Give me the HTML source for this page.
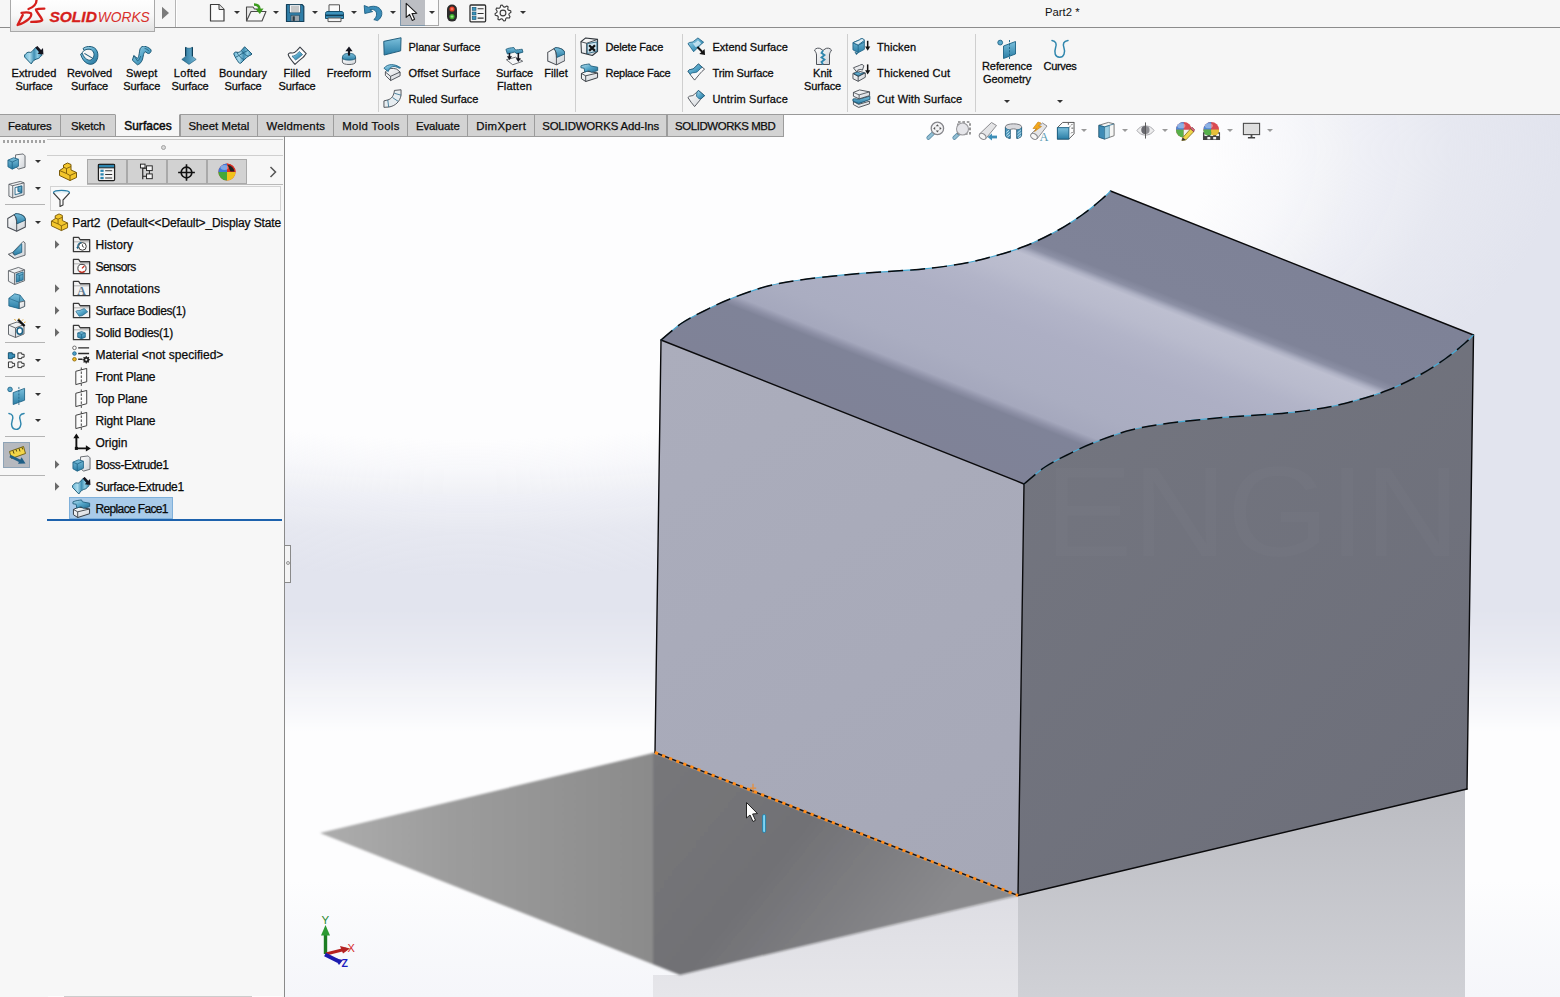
<!DOCTYPE html>
<html lang="en">
<head>
<meta charset="utf-8">
<title>Part2 * - SOLIDWORKS</title>
<style>
*{box-sizing:border-box;margin:0;padding:0}
html,body{width:1560px;height:997px;overflow:hidden;background:#f6f6f6}
body{position:relative;font-family:"Liberation Sans",sans-serif;font-size:11px;color:#111;-webkit-font-smoothing:antialiased}
.abs{position:absolute}
#titlebar{position:absolute;left:0;top:0;width:1560px;height:28px;background:#f6f6f6;border-bottom:1px solid #8c8c8c}
#ribbon{position:absolute;left:0;top:28px;width:1560px;height:87px;background:#f6f6f6}
#tabs{position:absolute;left:0;top:115px;width:1560px;height:22px}
#leftpanel{position:absolute;left:0;top:137px;width:285px;height:860px;background:#f7f7f7}
#viewport{position:absolute;left:0;top:0;width:1560px;height:997px;overflow:hidden}
/*VIEWPORT-CSS-S*/
#tabs{background:transparent}
.tab{position:absolute;top:-1px;height:22.5px;background:#d3d3d3;border:1px solid #9c9c9c;text-align:center;font-size:11.4px;line-height:22.5px;color:#0c0c0c;white-space:nowrap;-webkit-text-stroke:.25px #0c0c0c}
.tab.act{background:#f6f6f6;border-top-color:#f6f6f6;border-bottom-color:#f6f6f6;font-size:11.9px;-webkit-text-stroke:.5px #0c0c0c}
/*VIEWPORT-CSS-E*/
/*RIBBON-CSS-S*/
.lbl{position:absolute;width:80px;text-align:center;font-size:11px;line-height:13px;white-space:nowrap;color:#0a0a0a;-webkit-text-stroke:.28px #0a0a0a}
.slbl{position:absolute;font-size:11px;line-height:13px;white-space:nowrap;color:#0a0a0a;-webkit-text-stroke:.28px #0a0a0a}
.sep{position:absolute;top:6px;width:1px;height:78px;background:#cfcfcf}
.dar{position:absolute;width:0;height:0;border-left:3px solid transparent;border-right:3px solid transparent;border-top:3.5px solid #333}
#ribbon{border-bottom:1px solid #999}
/*RIBBON-CSS-E*/
/*TREE-CSS-S*/
.vsep{position:absolute;left:5px;width:40px;height:1px;background:#b4b4b4}
.ptab{position:absolute;top:22px;width:40.6px;height:25px;background:#d2d2d2;border:1px solid #a9a9a9}
.trow{position:absolute;font-size:12px;line-height:16px;white-space:nowrap;color:#0a0a0a;-webkit-text-stroke:.25px #0a0a0a}
/*TREE-CSS-E*/
</style>
</head>
<body>
<!--GDEFS-S--><svg width="0" height="0" style="position:absolute"><defs>
<linearGradient id="ib" x1="0" y1="0" x2="1" y2="1"><stop offset="0" stop-color="#b4deee"/><stop offset=".5" stop-color="#55a6c9"/><stop offset="1" stop-color="#226f95"/></linearGradient>
<linearGradient id="ibh" x1="0" y1="0" x2="1" y2="0"><stop offset="0" stop-color="#6fb9d8"/><stop offset=".3" stop-color="#a9daec"/><stop offset=".55" stop-color="#3f8fb4"/><stop offset=".75" stop-color="#8ccbe3"/><stop offset="1" stop-color="#3a88ae"/></linearGradient>
<linearGradient id="ibl" x1="0" y1="0" x2="1" y2="0"><stop offset="0" stop-color="#2a6f92"/><stop offset=".5" stop-color="#4a94b8"/><stop offset="1" stop-color="#78b8d6"/></linearGradient>
<linearGradient id="ib2" x1="0" y1="0" x2="0" y2="1"><stop offset="0" stop-color="#7cc0dc"/><stop offset="1" stop-color="#2a7ea6"/></linearGradient>
<linearGradient id="iw" x1="0" y1="0" x2="1" y2="1"><stop offset="0" stop-color="#ffffff"/><stop offset="1" stop-color="#cfd3d8"/></linearGradient>
<linearGradient id="iy" x1="0" y1="0" x2="1" y2="1"><stop offset="0" stop-color="#ffe27a"/><stop offset="1" stop-color="#d79a10"/></linearGradient>
</defs></svg><!--GDEFS-E-->
<div id="viewport">
<svg class="abs" style="left:0;top:0" width="1560" height="997" viewBox="0 0 1560 997">
<defs>
<radialGradient id="bgrad" cx="470" cy="150" r="1090" gradientUnits="userSpaceOnUse" gradientTransform="translate(470,150) scale(1,0.39) translate(-470,-150)">
<stop offset="0" stop-color="#e2e4ee" stop-opacity="0"/><stop offset="0.68" stop-color="#e2e4ee" stop-opacity="0"/><stop offset="0.75" stop-color="#e2e4ee" stop-opacity=".2"/><stop offset="0.81" stop-color="#e2e4ee" stop-opacity=".5"/><stop offset="0.9" stop-color="#e2e4ee" stop-opacity=".85"/><stop offset="1" stop-color="#e2e4ee" stop-opacity="1"/>
</radialGradient>
<linearGradient id="bgl" x1="0" y1="115" x2="0" y2="997" gradientUnits="userSpaceOnUse">
<stop offset="0" stop-color="#fff"/><stop offset="0.56" stop-color="#fff"/><stop offset="0.61" stop-color="#c4c4c4"/><stop offset="0.66" stop-color="#555"/><stop offset="0.70" stop-color="#000"/>
</linearGradient>
<mask id="ml" maskUnits="userSpaceOnUse" x="285" y="115" width="1275" height="882"><rect x="285" y="115" width="1275" height="882" fill="url(#bgl)"/></mask>
<linearGradient id="bgbot" x1="0" y1="880" x2="0" y2="997" gradientUnits="userSpaceOnUse">
<stop offset="0" stop-color="#f4f5f9" stop-opacity="0"/><stop offset="1" stop-color="#f5f6fa" stop-opacity="1"/>
</linearGradient>
<linearGradient id="topg" x1="661" y1="340" x2="773.5" y2="56.5" gradientUnits="userSpaceOnUse">
<stop offset="0" stop-color="#7f8297"/><stop offset="0.19" stop-color="#7f8398"/><stop offset="0.205" stop-color="#8d90a6"/><stop offset="0.225" stop-color="#a5a8bd"/><stop offset="0.3" stop-color="#aaadc1"/><stop offset="0.48" stop-color="#adafc4"/><stop offset="0.57" stop-color="#b2b4c8"/><stop offset="0.63" stop-color="#b9bbcd"/><stop offset="0.7" stop-color="#bdbfd0"/><stop offset="0.712" stop-color="#aeb1c4"/><stop offset="0.728" stop-color="#8c90a5"/><stop offset="0.75" stop-color="#7f8398"/><stop offset="1" stop-color="#7e8297"/>
</linearGradient>
<linearGradient id="leftg" x1="661" y1="340" x2="1020" y2="890" gradientUnits="userSpaceOnUse">
<stop offset="0" stop-color="#abadbc"/><stop offset="1" stop-color="#a6a8b7"/>
</linearGradient>
<linearGradient id="rightg" x1="1024" y1="420" x2="1467" y2="800" gradientUnits="userSpaceOnUse">
<stop offset="0" stop-color="#73757f"/><stop offset="1" stop-color="#6d6f7a"/>
</linearGradient>
<linearGradient id="shg" x1="320" y1="0" x2="653" y2="0" gradientUnits="userSpaceOnUse">
<stop offset="0" stop-color="#adadad"/><stop offset="0.4" stop-color="#9c9c9c"/><stop offset="1" stop-color="#8b8b8b"/>
</linearGradient>
<linearGradient id="shg2" x1="653" y1="760" x2="900" y2="960" gradientUnits="userSpaceOnUse">
<stop offset="0" stop-color="#77777a"/><stop offset="0.5" stop-color="#717175"/><stop offset="1" stop-color="#8a8a8d"/>
</linearGradient>
<linearGradient id="refl1" x1="0" y1="790" x2="0" y2="997" gradientUnits="userSpaceOnUse">
<stop offset="0" stop-color="#bbbcc2"/><stop offset="1" stop-color="#d0d1d6"/>
</linearGradient>
<linearGradient id="refl2" x1="0" y1="890" x2="0" y2="997" gradientUnits="userSpaceOnUse">
<stop offset="0" stop-color="#dddde3"/><stop offset="1" stop-color="#e6e6ea"/>
</linearGradient>
<filter id="soft" x="-5%" y="-5%" width="110%" height="110%"><feGaussianBlur stdDeviation="1.2"/></filter>
<clipPath id="cl"><rect x="285" y="137" width="368" height="860"/></clipPath>
<clipPath id="cr"><rect x="653" y="137" width="907" height="860"/></clipPath>
</defs>
<rect x="285" y="115" width="1275" height="882" fill="#fdfdfe"/>
<g mask="url(#ml)"><rect x="285" y="115" width="1275" height="882" fill="url(#bgrad)"/></g>
<rect x="285" y="880" width="1275" height="117" fill="url(#bgbot)"/>
<!-- floor reflections -->
<polygon points="653,975 653,997 1018,997 1018,895.5 680,975" fill="url(#refl2)"/>
<polygon points="1018,895.5 1018,997 1465,997 1465,789" fill="url(#refl1)"/>
<!-- shadow -->
<g filter="url(#soft)">
<polygon points="655,752.5 320,833 680,975 1018,895.5" fill="url(#shg)" clip-path="url(#cl)"/>
<polygon points="655,752.5 320,833 680,975 1018,895.5" fill="url(#shg2)" clip-path="url(#cr)"/>
</g>
<!-- faces -->
<polygon points="661,340 1024,484 1018,895.5 655,752.5" fill="url(#leftg)"/>
<path d="M1024.0 484.0 C1027.5 481.2 1037.8 471.8 1045.0 467.0 C1052.2 462.2 1059.0 459.0 1067.0 455.0 C1075.0 451.0 1082.3 447.2 1093.0 443.0 C1103.7 438.8 1118.2 433.3 1131.0 430.0 C1143.8 426.7 1154.0 425.1 1170.0 423.0 C1186.0 420.9 1208.3 418.8 1227.0 417.2 C1245.7 415.6 1265.9 414.9 1282.0 413.4 C1298.1 411.9 1311.2 410.1 1323.5 408.0 C1335.8 405.9 1344.9 403.4 1355.6 400.5 C1366.3 397.6 1376.9 394.6 1387.6 390.3 C1398.3 386.1 1410.1 380.2 1419.7 375.0 C1429.3 369.8 1437.5 364.2 1445.0 359.0 C1452.5 353.8 1459.8 347.5 1464.5 343.5 C1469.2 339.5 1472.0 336.4 1473.5 335.0 L1467 789 L1018 895.5 Z" fill="url(#rightg)"/>
<path d="M661.0 340.0 C664.5 337.2 674.8 327.8 682.0 323.0 C689.2 318.2 696.0 315.0 704.0 311.0 C712.0 307.0 719.3 303.2 730.0 299.0 C740.7 294.8 755.2 289.3 768.0 286.0 C780.8 282.7 791.0 281.1 807.0 279.0 C823.0 276.9 845.3 274.8 864.0 273.2 C882.7 271.6 902.9 270.9 919.0 269.4 C935.1 267.9 948.2 266.1 960.5 264.0 C972.8 261.9 981.9 259.4 992.6 256.5 C1003.3 253.6 1013.9 250.6 1024.6 246.3 C1035.3 242.1 1047.1 236.2 1056.7 231.0 C1066.3 225.8 1074.5 220.2 1082.0 215.0 C1089.5 209.8 1096.8 203.5 1101.5 199.5 C1106.2 195.5 1109.0 192.4 1110.5 191.0 L1473.5 335.0 C1472.0 336.4 1469.2 339.5 1464.5 343.5 C1459.8 347.5 1452.5 353.8 1445.0 359.0 C1437.5 364.2 1429.3 369.8 1419.7 375.0 C1410.1 380.2 1398.3 386.1 1387.6 390.3 C1376.9 394.6 1366.3 397.6 1355.6 400.5 C1344.9 403.4 1335.8 405.9 1323.5 408.0 C1311.2 410.1 1298.1 411.9 1282.0 413.4 C1265.9 414.9 1245.7 415.6 1227.0 417.2 C1208.3 418.8 1186.0 420.9 1170.0 423.0 C1154.0 425.1 1143.8 426.7 1131.0 430.0 C1118.2 433.3 1103.7 438.8 1093.0 443.0 C1082.3 447.2 1075.0 451.0 1067.0 455.0 C1059.0 459.0 1052.2 462.2 1045.0 467.0 C1037.8 471.8 1027.5 481.2 1024.0 484.0 Z" fill="url(#topg)"/>
<text x="1045" y="556" font-family="Liberation Sans, sans-serif" font-size="128" fill="#ffffff" fill-opacity=".016" textLength="415" lengthAdjust="spacingAndGlyphs">ENGIN</text>
<!-- edges -->
<g fill="none" stroke="#0a0a0c" stroke-width="1.4" stroke-linecap="round">
<path d="M661 340 L655 752.5"/><path d="M661 340 L1024 484"/><path d="M1024 484 L1018 895.5"/><path d="M1473.5 335 L1467 789"/><path d="M1018 895.5 L1467 789"/><path d="M1110.5 191 L1473.5 335"/>
</g>
<path d="M661.0 340.0 C664.5 337.2 674.8 327.8 682.0 323.0 C689.2 318.2 696.0 315.0 704.0 311.0 C712.0 307.0 719.3 303.2 730.0 299.0 C740.7 294.8 755.2 289.3 768.0 286.0 C780.8 282.7 791.0 281.1 807.0 279.0 C823.0 276.9 845.3 274.8 864.0 273.2 C882.7 271.6 902.9 270.9 919.0 269.4 C935.1 267.9 948.2 266.1 960.5 264.0 C972.8 261.9 981.9 259.4 992.6 256.5 C1003.3 253.6 1013.9 250.6 1024.6 246.3 C1035.3 242.1 1047.1 236.2 1056.7 231.0 C1066.3 225.8 1074.5 220.2 1082.0 215.0 C1089.5 209.8 1096.8 203.5 1101.5 199.5 C1106.2 195.5 1109.0 192.4 1110.5 191.0" fill="none" stroke="#46aad4" stroke-width="1.2"/>
<path d="M661.0 340.0 C664.5 337.2 674.8 327.8 682.0 323.0 C689.2 318.2 696.0 315.0 704.0 311.0 C712.0 307.0 719.3 303.2 730.0 299.0 C740.7 294.8 755.2 289.3 768.0 286.0 C780.8 282.7 791.0 281.1 807.0 279.0 C823.0 276.9 845.3 274.8 864.0 273.2 C882.7 271.6 902.9 270.9 919.0 269.4 C935.1 267.9 948.2 266.1 960.5 264.0 C972.8 261.9 981.9 259.4 992.6 256.5 C1003.3 253.6 1013.9 250.6 1024.6 246.3 C1035.3 242.1 1047.1 236.2 1056.7 231.0 C1066.3 225.8 1074.5 220.2 1082.0 215.0 C1089.5 209.8 1096.8 203.5 1101.5 199.5 C1106.2 195.5 1109.0 192.4 1110.5 191.0" fill="none" stroke="#0a0a0c" stroke-width="1.5" stroke-dasharray="15 7"/>
<path d="M1024.0 484.0 C1027.5 481.2 1037.8 471.8 1045.0 467.0 C1052.2 462.2 1059.0 459.0 1067.0 455.0 C1075.0 451.0 1082.3 447.2 1093.0 443.0 C1103.7 438.8 1118.2 433.3 1131.0 430.0 C1143.8 426.7 1154.0 425.1 1170.0 423.0 C1186.0 420.9 1208.3 418.8 1227.0 417.2 C1245.7 415.6 1265.9 414.9 1282.0 413.4 C1298.1 411.9 1311.2 410.1 1323.5 408.0 C1335.8 405.9 1344.9 403.4 1355.6 400.5 C1366.3 397.6 1376.9 394.6 1387.6 390.3 C1398.3 386.1 1410.1 380.2 1419.7 375.0 C1429.3 369.8 1437.5 364.2 1445.0 359.0 C1452.5 353.8 1459.8 347.5 1464.5 343.5 C1469.2 339.5 1472.0 336.4 1473.5 335.0" fill="none" stroke="#46aad4" stroke-width="1.2"/>
<path d="M1024.0 484.0 C1027.5 481.2 1037.8 471.8 1045.0 467.0 C1052.2 462.2 1059.0 459.0 1067.0 455.0 C1075.0 451.0 1082.3 447.2 1093.0 443.0 C1103.7 438.8 1118.2 433.3 1131.0 430.0 C1143.8 426.7 1154.0 425.1 1170.0 423.0 C1186.0 420.9 1208.3 418.8 1227.0 417.2 C1245.7 415.6 1265.9 414.9 1282.0 413.4 C1298.1 411.9 1311.2 410.1 1323.5 408.0 C1335.8 405.9 1344.9 403.4 1355.6 400.5 C1366.3 397.6 1376.9 394.6 1387.6 390.3 C1398.3 386.1 1410.1 380.2 1419.7 375.0 C1429.3 369.8 1437.5 364.2 1445.0 359.0 C1452.5 353.8 1459.8 347.5 1464.5 343.5 C1469.2 339.5 1472.0 336.4 1473.5 335.0" fill="none" stroke="#0a0a0c" stroke-width="1.5" stroke-dasharray="15 7"/>
<path d="M655 752.5 L1018 895.5" stroke="#15151a" stroke-width="1.5"/>
<path d="M655 752.5 L1018 895.5" stroke="#ff8c1a" stroke-width="3" stroke-dasharray="3.3 4.3"/>
<!-- snap mark -->
<path d="M753 783.8 v9.4 M749.8 788.2 h6.4" stroke="#f08a28" stroke-width="1.3" opacity=".85"/>
<!-- cursor -->
<path d="M746.5 802.5 L746.5 818 L750 815 L753 821.5 L755.5 820.3 L752.6 814 L757.5 813.6 Z" fill="#fff" stroke="#222" stroke-width="1"/>
<rect x="762.6" y="814.5" width="3" height="18" rx="1.4" fill="#7fd4f4" stroke="#1f7fa8" stroke-width=".9"/>
<!-- triad -->
<g>
<path d="M325.5 933 L325.5 954" stroke="#1c7d22" stroke-width="3.4"/>
<path d="M321 935.5 L325.5 925 L330 935.5 Z" fill="#2c9a32"/>
<path d="M326 954 L346 949" stroke="#b52222" stroke-width="3"/>
<path d="M340 946 L350 948.5 L343 953.5 Z" fill="#b52222"/>
<path d="M325 954.5 L338 961" stroke="#1c1cb0" stroke-width="4"/>
<path d="M334 958 L343 960 L339 965 Z" fill="#1c1cb0"/>
<text x="321.6" y="924.3" font-family="Liberation Sans, sans-serif" font-size="11.5" fill="#2c8a32">Y</text>
<text x="347.6" y="951.8" font-family="Liberation Sans, sans-serif" font-size="11" fill="#d42a2a">X</text>
<text x="341.6" y="967" font-family="Liberation Sans, sans-serif" font-size="10.5" font-weight="bold" fill="#1c1cc0">Z</text>
</g>
</svg>
</div>
<div id="titlebar">
<!--TITLEBAR-S-->
<div class="abs" style="left:10px;top:-1px;width:145px;height:33px;border:1px solid #a9a9a9;background:linear-gradient(#fefefe 0%,#f8f8f8 50%,#e2e2e2 100%);z-index:5">
<svg class="abs" style="left:0;top:0" width="145" height="33" viewBox="10 -1 145 33">
<g fill="none" stroke="#d61f1c" stroke-linecap="round" transform="translate(0,-0.3)">
<path d="M35.5 -1 C35.8 3.5 32 6.5 27.5 8.3" stroke-width="2.3"/>
<path d="M20.5 12.2 C24 11.6 28 11.7 30 12.6 C31.5 16 26 21.5 16.6 24.3 L21.8 14.2" stroke-width="2.3" stroke-linejoin="round"/>
<path d="M43.3 7.9 C40 7.9 36 8 35 8.8 C34.6 10.5 40 15.5 41.2 19.3 C40.5 21.3 35 21.2 30.3 21.2" stroke-width="2.4"/>
</g>
<text x="48.4" y="20.6" font-family="Liberation Sans, sans-serif" font-size="14.2" font-style="italic" font-weight="bold" fill="#d61f1c" stroke="#d61f1c" stroke-width=".3" textLength="47.5" lengthAdjust="spacingAndGlyphs">SOLID</text>
<text x="96.8" y="20.6" font-family="Liberation Sans, sans-serif" font-size="14.2" font-style="italic" fill="#d8302c" textLength="52" lengthAdjust="spacingAndGlyphs">WORKS</text>
</svg></div>
<svg class="abs" style="left:160px;top:5px" width="12" height="16" viewBox="0 0 12 16"><path d="M2 1.8 L9 8 L2 14.2 Z" fill="#7b7b7b"/></svg>
<div class="abs" style="left:175px;top:0;width:1px;height:27px;background:#b5b5b5"></div><div class="abs" style="left:176px;top:0;width:1px;height:27px;background:#fff"></div>
<svg class="abs" style="left:209px;top:3px" width="17" height="20" viewBox="0 0 17 20"><path d="M1.5 1.5 L10 1.5 L15 6.5 L15 18 L1.5 18 Z" fill="#fbfbfb" stroke="#3c3c3c" stroke-width="1.2" stroke-linejoin="round"/><path d="M10 1.5 L10 6.5 L15 6.5" fill="#e4e4e4" stroke="#3c3c3c" stroke-width="1"/></svg>
<div class="dar" style="left:234px;top:11px;border-top-color:#333"></div>
<svg class="abs" style="left:245px;top:3px" width="23" height="20" viewBox="0 0 23 20"><path d="M1.5 18 L1.5 4 L8 4 L9.5 6 L15 6 L15 9" fill="#e9e9e9" stroke="#4a4a4a" stroke-width="1.1" stroke-linejoin="round"/><path d="M1.5 18 L6 8.5 L21 8.5 L17 18 Z" fill="#f6f6f6" stroke="#4a4a4a" stroke-width="1.1" stroke-linejoin="round"/><path d="M9 1.5 C13 1.5 14.5 3.5 14.5 6.5" fill="none" stroke="#3a9a1c" stroke-width="2.4"/><path d="M10.5 6 L14.8 11 L18.5 5.5 Z" fill="#3a9a1c"/></svg>
<div class="dar" style="left:273px;top:11px;border-top-color:#333"></div>
<svg class="abs" style="left:285px;top:3px" width="20" height="20" viewBox="0 0 20 20"><path d="M1.5 1.5 L17 1.5 L18.8 3.3 L18.8 18.5 L1.5 18.5 Z" fill="#2f7ea8" stroke="#14405a" stroke-width="1.2" stroke-linejoin="round"/><rect x="4.6" y="1.8" width="10.8" height="8" fill="#f2f4f6" stroke="#14405a" stroke-width=".6"/><path d="M6 4 h8 M6 6 h8 M6 8 h8" stroke="#777" stroke-width=".7"/><rect x="6" y="12.2" width="8.5" height="6" fill="#9aa4ab" stroke="#14405a" stroke-width=".6"/><rect x="7.6" y="13.3" width="2.2" height="4.6" fill="#2a3a44"/></svg>
<div class="dar" style="left:312px;top:11px;border-top-color:#333"></div>
<svg class="abs" style="left:324px;top:3px" width="21" height="20" viewBox="0 0 21 20"><path d="M5 9 L5 1.8 L15.5 1.8 L15.5 9" fill="#fafafa" stroke="#555" stroke-width="1"/><path d="M1.5 15.5 L1.5 10.5 C1.5 9 2.5 8.5 4 8.5 L17 8.5 C18.5 8.5 19.5 9 19.5 10.5 L19.5 15.5 Z" fill="#3b92bc" stroke="#14506e" stroke-width="1"/><rect x="2" y="11.6" width="17" height="1.6" fill="#0f3e57"/><path d="M4 15 L4 18.6 L17 18.6 L17 15 Z" fill="#f4f4f4" stroke="#555" stroke-width="1"/></svg>
<div class="dar" style="left:351px;top:11px;border-top-color:#333"></div>
<svg class="abs" style="left:363px;top:4px" width="21" height="18" viewBox="0 0 21 18"><path d="M1.2 1.5 L1.8 9.5 L9.6 7.6 L6.9 5.8 C10 4.6 13.6 6.6 13.6 10 C13.6 12.6 12.4 14.4 10.8 15.6 L14.6 16.6 C17.6 14.6 19.2 11.6 18.8 8.4 C18.2 3.8 12.6 .6 5.4 3.2 Z" fill="#3b8db8" stroke="#1c5e82" stroke-width=".9" stroke-linejoin="round"/></svg>
<div class="dar" style="left:389.5px;top:11px;border-top-color:#333"></div>
<div class="abs" style="left:400px;top:0;width:25.5px;height:25.5px;background:#bcbec3;border:1px solid #7f97ab;border-top:none"></div><div class="abs" style="left:425px;top:0;width:13.5px;height:25.5px;background:#fbfbfb;border:1px solid #a9a9a9;border-top:none;border-left:none"></div>
<svg class="abs" style="left:404px;top:2px" width="16" height="20" viewBox="0 0 16 20"><path d="M2.2 1.4 L2.2 15.4 L5.6 12.4 L8.2 18.4 L10.6 17.3 L8 11.6 L12.8 11.3 Z" fill="#fff" stroke="#1a1a1a" stroke-width="1.1" stroke-linejoin="round"/></svg>
<div class="dar" style="left:429px;top:11px;border-top-color:#333"></div>
<svg class="abs" style="left:446px;top:4px" width="12" height="18" viewBox="0 0 12 18"><rect x="1" y=".6" width="10" height="17" rx="5" fill="#2b2b2b"/><circle cx="6" cy="5" r="2.6" fill="#e8361f"/><circle cx="6" cy="12.6" r="2.6" fill="#3fae2c"/><path d="M6 3.6 v2.8 M4.6 5 h2.8" stroke="#ff9d86" stroke-width=".8"/><path d="M6 11.2 v2.8 M4.6 12.6 h2.8" stroke="#a7ea92" stroke-width=".8"/></svg>
<svg class="abs" style="left:469px;top:3.5px" width="18" height="19" viewBox="0 0 18 19"><rect x="1" y="1" width="15.6" height="16.8" rx="1" fill="#f6f6f6" stroke="#2e2e2e" stroke-width="1.3"/><rect x="3.2" y="3.3" width="3.8" height="3" fill="#3a95be" stroke="#15506e" stroke-width=".6"/><rect x="3.2" y="8" width="3.8" height="3" fill="#3a95be" stroke="#15506e" stroke-width=".6"/><rect x="3.2" y="12.6" width="3.8" height="3" fill="#3a95be" stroke="#15506e" stroke-width=".6"/><path d="M8.6 4.8 h6 M8.6 9.5 h6 M8.6 14.1 h6" stroke="#333" stroke-width="1.1"/></svg>
<svg class="abs" style="left:493px;top:3px" width="20" height="20" viewBox="0 0 20 20"><path d="M17.66 7.68 L17.96 9.22 L16.07 10.60 L15.84 11.77 L17.06 13.77 L16.18 15.08 L13.87 14.72 L12.88 15.38 L12.32 17.66 L10.78 17.96 L9.40 16.07 L8.23 15.84 L6.23 17.06 L4.92 16.18 L5.28 13.87 L4.62 12.88 L2.34 12.32 L2.04 10.78 L3.93 9.40 L4.16 8.23 L2.94 6.23 L3.82 4.92 L6.13 5.28 L7.12 4.62 L7.68 2.34 L9.22 2.04 L10.60 3.93 L11.77 4.16 L13.77 2.94 L15.08 3.82 L14.72 6.13 L15.38 7.12 Z" fill="#fbfbfb" stroke="#3a3a3a" stroke-width="1.1" stroke-linejoin="round"/><circle cx="10" cy="10" r="2.9" fill="#f6f6f6" stroke="#3a3a3a" stroke-width="1.1"/></svg>
<div class="dar" style="left:520px;top:11px;border-top-color:#333"></div>
<div class="abs" style="left:1045px;top:6px;font-size:11.3px;line-height:13px;color:#111">Part2 *</div>
<!--TITLEBAR-E-->
</div>
<div id="ribbon">
<!--RIBBON-S-->
<svg class="abs" style="left:24.0px;top:18.0px" width="20" height="20" viewBox="0 0 20 20"><path d="M0.6 9 C2.5 7 3.5 6 5 6.2 C6.5 6.5 7 6.5 8 5.5 L11.8 1.4 L17.9 9.2 C16.5 10.5 15.5 12 14.5 12.4 C13 13 11.5 13.2 10.1 14.2 C9 15 8.2 16.5 7.2 17.9 L0.6 11 Z" fill="url(#ibh)" stroke="#1c5c78" stroke-width="1" stroke-linejoin="round"/><path d="M12.3 0.8 L17 6" stroke="#15151f" stroke-width="2.7"/><path d="M19.4 8.4 L19 2 L13.5 7.7 Z" fill="#15151f"/></svg><div class="lbl" style="left:-6px;top:39.3px"><span style="letter-spacing:0.12px">Extruded</span><br><span style="letter-spacing:-0.13px">Surface</span></div>
<svg class="abs" style="left:79.5px;top:18.0px" width="20" height="20" viewBox="0 0 20 20"><path d="M3 2.6 C5.5 0.2 11 -0.4 14.6 2 C19 5 19 13.5 14.6 17 C10.5 20 3.5 18 0.6 8.2 L2.2 7.2 C4.5 13.2 9 15.6 11.8 13.4 C14.8 11 14.8 6 11.6 4 C9.4 2.7 6.6 3 4.2 4.4 Z" fill="url(#ib)" stroke="#1d5a78" stroke-width="1" stroke-linejoin="round"/><path d="M4.2 4.4 C2.8 5.5 2.2 6.4 2.2 7.2" fill="none" stroke="#1d5a78" stroke-width="1"/><path d="M4.4 7.4 L13.2 12.6" stroke="#1d5a78" stroke-width="1.1"/></svg><div class="lbl" style="left:49.5px;top:39.3px"><span style="letter-spacing:-0.12px">Revolved</span><br><span style="letter-spacing:-0.13px">Surface</span></div>
<svg class="abs" style="left:131.7px;top:18.0px" width="20" height="20" viewBox="0 0 20 20"><path d="M8.1 2.8 C9 0.6 11 0 12.6 0.3 C14.6 0.6 17 1.8 18.6 3.2 C19.4 4.4 19.2 5.4 18.6 6.2 C17.8 7.4 16.8 7.8 15.8 7.4 L13 5.6 C12.2 6.4 11.6 8 11.2 10 C10.8 12.4 10.4 14 9.6 15.4 C8.6 17.2 7 18.4 5.4 18.8 L0.4 14.2 L1.8 9.6 L5.4 12.4 C6.4 11.4 6.8 9.8 7.2 7.8 C7.5 6 7.6 4.2 8.1 2.8 Z" fill="url(#ib)" stroke="#1d5a78" stroke-width="1" stroke-linejoin="round"/><path d="M12.6 2.4 C14.2 2.6 16 3.8 17 5.2 M1.8 9.6 L5.6 15 C7 14.4 8 12.4 8.6 10" fill="none" stroke="#1d5a78" stroke-width=".8"/></svg><div class="lbl" style="left:101.69999999999999px;top:39.3px"><span style="letter-spacing:0.17px">Swept</span><br><span style="letter-spacing:-0.13px">Surface</span></div>
<svg class="abs" style="left:180.0px;top:18.0px" width="20" height="20" viewBox="0 0 20 20"><path d="M5.6 1.3 C7.5 2.6 10.5 2.6 12.4 1.3 L12.4 10.4 L16.2 13.4 L9 18.4 L1.8 13.4 L5.6 10.4 Z" fill="url(#ibl)" stroke="#1d5a78" stroke-width=".6" stroke-linejoin="round"/><path d="M5.6 1.3 L5.6 10.2 M12.4 1.3 L12.4 10.2" stroke="#0f3f5a" stroke-width="1.2"/></svg><div class="lbl" style="left:150px;top:39.3px"><span style="letter-spacing:0.30px">Lofted</span><br><span style="letter-spacing:-0.13px">Surface</span></div>
<svg class="abs" style="left:233.0px;top:18.0px" width="20" height="20" viewBox="0 0 20 20"><path d="M0.8 8 C1 6.4 2.4 5.6 3.8 6.2 C5.6 6.8 7 6 8.4 4.4 L11.6 0.8 L19 8 C17.6 9.6 16.6 9.2 15 10.4 C13 12 10.6 14.4 8 17 C7.2 17.6 6.4 17.4 5.8 16.6 C4 14 2 11.4 0.8 8 Z" fill="url(#ibh)" stroke="#1d5a78" stroke-width="1" stroke-linejoin="round"/><path d="M3.8 6.2 C5.6 9.6 8.4 13 11.4 13.6 M8.4 4.4 C10.4 7.6 12.6 9.6 15.4 10.2 M2.4 11.4 C6.4 9.6 10 6.4 15.2 4.4" fill="none" stroke="#1d5a78" stroke-width=".8"/></svg><div class="lbl" style="left:203px;top:39.3px"><span style="letter-spacing:0.14px">Boundary</span><br><span style="letter-spacing:-0.13px">Surface</span></div>
<svg class="abs" style="left:287.0px;top:18.0px" width="20" height="20" viewBox="0 0 20 20"><path d="M1.2 8.6 C1.6 7 3.4 6.6 5 7 C7 7.4 8.4 6 9.8 4.6 L13 1.2 L19.2 7.6 C17.6 9 17.4 10.4 15.8 11.6 C13.6 13.2 11 15.4 8 18.4 C5.6 15.4 2.4 12.4 1.2 8.6 Z" fill="#fdfdfe" stroke="#3a3f46" stroke-width="1.1" stroke-linejoin="round"/><path d="M5 10 C7.2 10.2 9 8.8 10.6 7.2 L12.4 5.4 L15.6 8.6 C14 10 12.6 11.4 10.8 12.6 L8.6 14 C7.2 12.6 5.8 11.4 5 10 Z" fill="url(#ib)" stroke="#1d5a78" stroke-width=".6"/></svg><div class="lbl" style="left:257px;top:39.3px"><span style="letter-spacing:0.15px">Filled</span><br><span style="letter-spacing:-0.13px">Surface</span></div>
<svg class="abs" style="left:339.0px;top:18.0px" width="20" height="20" viewBox="0 0 20 20"><path d="M3.4 12 L3.4 16 C3.4 19.4 16.6 19.4 16.6 16 L16.6 12 Z" fill="url(#iw)" stroke="#55595f" stroke-width=".9"/><path d="M3.4 12 C3.4 8.4 6 7.4 10 7.4 C14 7.4 16.6 8.4 16.6 12 C16.6 14.8 3.4 14.8 3.4 12 Z" fill="url(#ib2)" stroke="#1d5a78" stroke-width=".9"/><path d="M10 9.6 L10 4" stroke="#15151f" stroke-width="2.2"/><path d="M6.4 5.2 L10 0.6 L13.6 5.2 Z" fill="#15151f"/></svg><div class="lbl" style="left:309px;top:39.3px"><span style="letter-spacing:-0.01px">Freeform</span></div>
<div class="sep" style="left:378px"></div>
<svg class="abs" style="left:383px;top:9px" width="19" height="19" viewBox="0 0 20 20"><path d="M0.8 4.6 L19 0.8 L18.6 14.6 L1.2 19 Z" fill="url(#ib2)" stroke="#1d5a78" stroke-width="1" stroke-linejoin="round"/></svg><div class="slbl" style="left:408.5px;top:13.200000000000003px"><span style="letter-spacing:-0.07px">Planar Surface</span></div>
<svg class="abs" style="left:383px;top:35px" width="19" height="19" viewBox="0 0 20 20"><path d="M2.5 13 L2.5 9.5 C5 5.5 10 5 14.5 6.5 L18 9.5 L18 13.5 L8 18.5 Z" fill="url(#iw)" stroke="#3c4148" stroke-width=".9" stroke-linejoin="round"/><path d="M2.5 9.5 L8 14 L18 9.5 M8 14 L8 18.5" fill="none" stroke="#3c4148" stroke-width=".9" stroke-linejoin="round"/><path d="M1 5.5 C5 .5 12 .5 18.5 5 L17 5.5 C12 2.5 7.5 3 5.5 9 Z" fill="url(#ib)" stroke="#1d6285" stroke-width=".9" stroke-linejoin="round"/></svg><div class="slbl" style="left:408.5px;top:39.3px"><span style="letter-spacing:0.12px">Offset Surface</span></div>
<svg class="abs" style="left:383px;top:61px" width="19" height="19" viewBox="0 0 20 20"><path d="M12 1.5 L19 .8 L19 6.5 C18 13 13 18 6 19 L1 19.3 L1 12.5 L5 11.5 C9 10.5 11.5 7 12 1.5 Z" fill="#e7edf1" stroke="#3c4148" stroke-width=".9" stroke-linejoin="round"/><path d="M12 4.5 L19 6.5 M10 9 L16 13 M5 11.5 L6 19" fill="none" stroke="#1d6285" stroke-width=".8"/></svg><div class="slbl" style="left:408.5px;top:65.2px"><span style="letter-spacing:0.02px">Ruled Surface</span></div>
<svg class="abs" style="left:505.25px;top:19.25px" width="18.5" height="18.5" viewBox="0 0 20 20"><path d="M1.5 13.8 L11.5 11 L19.2 15.4 L8.4 19.2 Z" fill="#f7f8f9" stroke="#55595f" stroke-width=".9" stroke-linejoin="round"/><path d="M1 2.6 C3 1.2 6 1 9.6 0.6 L11 3 C13 3.4 16 2.6 18.6 2.4 L19.4 5.6 C17 6.4 14.6 7 12.4 7.2 L10.6 5.4 C8 6 5.4 6.8 2.6 7.6 Z" fill="url(#ib2)" stroke="#1d5a78" stroke-width=".9" stroke-linejoin="round"/><path d="M4.8 6.4 L4.8 12 M14.4 6.4 L14.4 14.2" stroke="#15151f" stroke-width="1.7"/><path d="M2 10 L4.8 14 L7.6 10 Z M11.6 12.2 L14.4 16.2 L17.2 12.2 Z" fill="#15151f"/></svg><div class="lbl" style="left:474.5px;top:39.3px"><span style="letter-spacing:-0.13px">Surface</span><br><span style="letter-spacing:0.21px">Flatten</span></div>
<svg class="abs" style="left:546.75px;top:19.25px" width="18.5" height="18.5" viewBox="0 0 20 20"><path d="M0.8 5.8 L9.4 0.7 C14 0.7 19.3 3 19.3 7.5 L19.3 14.7 L10.2 19.3 L0.8 15.1 Z" fill="url(#iw)" stroke="#4a4e55" stroke-width="1.1" stroke-linejoin="round"/><path d="M9.4 0.7 C14 0.7 19.3 3 19.3 7.5 L10.2 11.5 C10.2 8 9.8 4 7.4 1.9 Z" fill="url(#ib2)" stroke="#1d5a78" stroke-width=".9" stroke-linejoin="round"/><path d="M7.4 1.9 C9.8 4 10.2 8 10.2 11.5 L10.2 19.3" fill="none" stroke="#4a4e55" stroke-width="1"/></svg><div class="lbl" style="left:516px;top:39.3px"><span style="letter-spacing:0.08px">Fillet</span></div>
<div class="sep" style="left:575px"></div>
<svg class="abs" style="left:579.5px;top:9px" width="19" height="19" viewBox="0 0 20 20"><path d="M1 5 L6 1 L18.5 2.5 L18.5 15 L13 19.5 L1.5 16.5 Z" fill="url(#iw)" stroke="#2f353b" stroke-width="1.1" stroke-linejoin="round"/><path d="M1 5 L7 6.6 L18.5 2.5 M7 6.6 L7 18" fill="none" stroke="#2f353b" stroke-width=".9"/><path d="M7.6 7 L17.8 5.2 L17.8 15 L7.6 17.4 Z" fill="#cfe4ee" stroke="#1d5a78" stroke-width=".9"/><path d="M9.6 8.6 L15.8 14.6 M15.8 8.6 L9.6 14.6" stroke="#111" stroke-width="2.3"/></svg><div class="slbl" style="left:605.5px;top:13.200000000000003px"><span style="letter-spacing:-0.15px">Delete Face</span></div>
<svg class="abs" style="left:579.5px;top:35px" width="19" height="19" viewBox="0 0 20 20"><path d="M1.5 11 L7 8.5 L18.5 10.5 L18.5 15.5 L6 19.5 L1.5 16.5 Z" fill="url(#iw)" stroke="#2f353b" stroke-width="1" stroke-linejoin="round"/><path d="M1.5 11 L6 13.5 L18.5 10.5 M6 13.5 L6 19.5" fill="none" stroke="#2f353b" stroke-width=".9"/><path d="M1 3 C4 1.6 7 1.4 10 1 L11 3 C13.5 3.6 16 4 18.6 4.4 L18.6 8 C16.5 8.8 14.5 9.2 12 9.6 L9.4 8 L5 9.6 L4.4 5.6 L1 5 Z" fill="url(#ib)" stroke="#1d5a78" stroke-width=".9" stroke-linejoin="round"/></svg><div class="slbl" style="left:605.5px;top:39.3px"><span style="letter-spacing:-0.25px">Replace Face</span></div>
<div class="sep" style="left:682px"></div>
<svg class="abs" style="left:687px;top:9px" width="19" height="19" viewBox="0 0 20 20"><path d="M1 7 C3 4.5 5 6.5 7 4.5 L11.5 1 L17.5 5.5 C15.5 7 14.5 8 13 9.5 L7 15.5 C5 12.5 3 10 1 7 Z" fill="url(#ib)" stroke="#1d6285" stroke-width=".9" stroke-linejoin="round"/><path d="M6 6.5 C8 7 10 5 11.5 3.5 L15 6.5 C13 8 11 10.5 9 10.5 Z" fill="#d7eef7" opacity=".8"/><path d="M11 10.5 L16 15.5" stroke="#111" stroke-width="2"/><path d="M19 19 L18.5 12.5 L13 18 Z" fill="#111"/></svg><div class="slbl" style="left:712.5px;top:13.200000000000003px"><span style="letter-spacing:0.01px">Extend Surface</span></div>
<svg class="abs" style="left:687px;top:35px" width="19" height="19" viewBox="0 0 20 20"><path d="M1 8.5 C3 5.5 5.5 8 8 5 L12 1 L18.5 6.5 C16 8.5 15 9.5 13 12 L8 18 C5.5 15 3 12 1 8.5 Z" fill="#f7f8fa" stroke="#3c4148" stroke-width=".9" stroke-linejoin="round"/><path d="M1 8.5 C3 5.5 5.5 8 8 5 L12 1 L16 4.5 C13 6 12 9.5 9 10 C6.5 10.5 5.5 9.5 3.5 12 C2.5 10.8 1.8 9.8 1 8.5 Z" fill="url(#ib)" stroke="#1d6285" stroke-width=".9" stroke-linejoin="round"/></svg><div class="slbl" style="left:712.5px;top:39.3px"><span style="letter-spacing:-0.12px">Trim Surface</span></div>
<svg class="abs" style="left:687px;top:61px" width="19" height="19" viewBox="0 0 20 20"><path d="M1 9 C3 6 5.5 8.5 8 5.5 L12 1.5 L18.5 7 C16 9 15 10 13 12.5 L8 18.5 C5.5 15.5 3 12.5 1 9 Z" fill="url(#iw)" stroke="#3c4148" stroke-width=".9" stroke-linejoin="round"/><path d="M10.5 3.5 L12 1.5 L18.5 7 L15.5 9.8 L13 10.5 L10 7.5 Z" fill="url(#ib)" stroke="#1d6285" stroke-width=".9" stroke-linejoin="round"/></svg><div class="slbl" style="left:712.5px;top:65.2px"><span style="letter-spacing:0.15px">Untrim Surface</span></div>
<svg class="abs" style="left:812.5px;top:18.0px" width="20" height="20" viewBox="0 0 20 20"><path d="M1.5 4 C3 2 6 1.5 8 3 L10 4.5 L12 3 C14 1.5 17 2 18.5 4 C17.5 6 16.5 7 16.5 9 L16.5 18.5 L3.5 18.5 L3.5 9 C3.5 7 2.5 6 1.5 4 Z" fill="url(#iw)" stroke="#3c4148" stroke-width=".9" stroke-linejoin="round"/><path d="M10 4.5 L8.5 7 L11.5 9 L8.5 11.5 L11.5 13.5 L8.5 16 L10 18.5" fill="none" stroke="#2f86ad" stroke-width="1.8"/></svg><div class="lbl" style="left:782.5px;top:39.3px"><span style="letter-spacing:-0.04px">Knit</span><br><span style="letter-spacing:-0.13px">Surface</span></div>
<div class="sep" style="left:847px"></div>
<svg class="abs" style="left:851.5px;top:9px" width="19" height="19" viewBox="0 0 20 20"><path d="M1 6 L8 3 C10 1 12 1.5 13 3.5 L13 13 L6.5 16.5 L1 13.5 Z" fill="url(#ib2)" stroke="#1d6285" stroke-width=".9" stroke-linejoin="round"/><path d="M1 6 L6.5 8.5 L13 5.5 M6.5 8.5 L6.5 16.5" fill="none" stroke="#1d6285" stroke-width=".8"/><path d="M1 6 L8 3 C10 1 12 1.5 13 3.5 L6.5 8.5 Z" fill="#dfeef5" stroke="#1d6285" stroke-width=".9" stroke-linejoin="round"/><path d="M16.5 4 L16.5 11.5" stroke="#111" stroke-width="1.6"/><path d="M13.8 10 L16.5 14.5 L19.2 10 Z" fill="#111"/><path d="M2.5 15.5 L4.5 19 L6.5 17 Z" fill="#1d6285"/></svg><div class="slbl" style="left:877px;top:13.200000000000003px"><span style="letter-spacing:0.08px">Thicken</span></div>
<svg class="abs" style="left:851.5px;top:35px" width="19" height="19" viewBox="0 0 20 20"><path d="M1 11 L7 8.5 L14 10.5 L14 15 L6.5 19.3 L1 16.5 Z" fill="url(#iw)" stroke="#3c4148" stroke-width=".9" stroke-linejoin="round"/><path d="M2 11.5 C4 9.5 7 9.5 9 11 L13 10.5 L7 14 Z" fill="url(#ib2)" stroke="#1d6285" stroke-width=".9" stroke-linejoin="round"/><path d="M1 11 L6.5 14 L14 10.5 M6.5 14 L6.5 19.3" fill="none" stroke="#3c4148" stroke-width=".9" stroke-linejoin="round"/><path d="M1.5 5 L8 2.5 C10 1 11.5 1.5 12.5 3 L11 7.5 C9 6 6 7 4.5 9 Z" fill="url(#iw)" stroke="#3c4148" stroke-width=".9" stroke-linejoin="round"/><path d="M16.5 1.5 L16.5 9" stroke="#111" stroke-width="1.6"/><path d="M13.8 7.5 L16.5 12 L19.2 7.5 Z" fill="#111"/></svg><div class="slbl" style="left:877px;top:39.3px"><span style="letter-spacing:0.18px">Thickened Cut</span></div>
<svg class="abs" style="left:851.5px;top:61px" width="19" height="19" viewBox="0 0 20 20"><path d="M1.5 13.2 L7 16.2 L18.5 12.8 L18.5 15.6 L7 19.4 L1.5 16.4 Z" fill="url(#iw)" stroke="#3a3f46" stroke-width=".9" stroke-linejoin="round"/><path d="M1 10.6 C3.5 9.4 5.5 11.6 8 10.4 L18.8 7.6 L18.8 11 L7 15.4 L1 12.8 Z" fill="url(#ib2)" stroke="#174e6a" stroke-width=".9" stroke-linejoin="round"/><path d="M1.5 3.6 L8 1 L18.5 3 L18.5 7 L7.5 10.4 L1.5 7.6 Z" fill="url(#iw)" stroke="#3a3f46" stroke-width=".9" stroke-linejoin="round"/><path d="M1.5 3.6 L7.5 6.2 L18.5 3 M7.5 6.2 L7.5 10.4" fill="none" stroke="#3a3f46" stroke-width=".8"/></svg><div class="slbl" style="left:877px;top:65.2px"><span style="letter-spacing:0.14px">Cut With Surface</span></div>
<div class="sep" style="left:975px"></div>
<svg class="abs" style="left:997.0px;top:11.0px" width="20" height="20" viewBox="0 0 20 20"><circle cx="3.2" cy="3.6" r="2.4" fill="#5aa9cc" stroke="#1d6285" stroke-width=".9"/><path d="M6.5 7 L18.5 2.5 L18.5 15 L6.5 19.5 Z" fill="url(#ib2)" stroke="#1d6285" stroke-width=".9" stroke-linejoin="round"/><path d="M12.5 1 L12.5 20" stroke="#1d6285" stroke-width=".9" stroke-dasharray="2.2 1.2"/></svg><div class="lbl" style="left:967px;top:32.3px"><span style="letter-spacing:-0.09px">Reference</span><br><span style="letter-spacing:-0.01px">Geometry</span></div>
<svg class="abs" style="left:1050.0px;top:11.0px" width="20" height="20" viewBox="0 0 20 20"><path d="M2 1.5 C6 2 7 5 5.5 9 C4 13.5 5 18 9.5 18.3 C14 18.5 15.5 13 14 9 C12.5 5 13.5 2 18 1.5" fill="none" stroke="#2f86ad" stroke-width="1.5" stroke-linecap="round"/></svg><div class="lbl" style="left:1020px;top:32.3px"><span style="letter-spacing:-0.31px">Curves</span></div>
<div class="dar" style="left:1004px;top:71.5px"></div><div class="dar" style="left:1056.5px;top:71.5px"></div>
<!--RIBBON-E-->
</div>
<div id="tabs">
<!--TABS-S-->
<div class="tab" style="left:-1px;width:61.5px;letter-spacing:-0.20px;padding-left:-0.20px">Features</div>
<div class="tab" style="left:59.5px;width:56.9px;letter-spacing:-0.14px;padding-left:-0.14px">Sketch</div>
<div class="tab act" style="left:115.4px;width:65.1px;letter-spacing:0.09px;padding-left:0.09px">Surfaces</div>
<div class="tab" style="left:179.5px;width:78.7px;letter-spacing:0.01px;padding-left:0.01px">Sheet Metal</div>
<div class="tab" style="left:257.2px;width:77.1px;letter-spacing:0.23px;padding-left:0.23px">Weldments</div>
<div class="tab" style="left:333.3px;width:75.0px;letter-spacing:0.32px;padding-left:0.32px">Mold Tools</div>
<div class="tab" style="left:407.3px;width:61.1px;letter-spacing:-0.08px;padding-left:-0.08px">Evaluate</div>
<div class="tab" style="left:467.4px;width:67.3px;letter-spacing:0.32px;padding-left:0.32px">DimXpert</div>
<div class="tab" style="left:533.7px;width:133.8px;letter-spacing:-0.12px;padding-left:-0.12px">SOLIDWORKS Add-Ins</div>
<div class="tab" style="left:666.5px;width:117.5px;letter-spacing:-0.38px;padding-left:-0.38px">SOLIDWORKS MBD</div>
<!--TABS-E-->
</div>
<div id="leftpanel">
<!--LEFTPANEL-S-->
<div class="abs" style="left:0;top:-1px;width:285px;height:1px;background:#9c9c9c"></div>
<div class="abs" style="left:47px;top:2px;width:236px;height:1px;background:#c9c9c9"></div>
<div class="abs" style="left:47px;top:17.5px;width:236px;height:1px;background:#cfcfcf"></div>
<div class="abs" style="left:3px;top:2.5px;width:42px;height:3px;background:repeating-linear-gradient(90deg,#a4a4a4 0,#a4a4a4 2px,transparent 2px,transparent 4px)"></div>
<div class="abs" style="left:161px;top:7.5px;width:5px;height:5px;border-radius:50%;background:#d8d8d8;border:1px solid #a2a2a2"></div>
<div class="abs" style="left:283.5px;top:-1px;width:1.5px;height:861px;background:#8a8a8a"></div>
<svg class="abs" style="left:6.5px;top:15.5px" width="19" height="19" viewBox="0 0 20 20"><path d="M9 2 L17 1 L19 3 L19 15 L12 17 L9 14 Z" fill="url(#iw)" stroke="#55595f" stroke-width=".9" stroke-linejoin="round"/><path d="M1 7.5 L7 5 L12 6.5 L12 14 L5.5 17 L1 14.5 Z" fill="url(#ib2)" stroke="#1d6285" stroke-width=".9" stroke-linejoin="round"/><path d="M1 7.5 L5.5 9.5 L12 6.5 M5.5 9.5 L5.5 17" fill="none" stroke="#1d6285" stroke-width=".8"/></svg>
<div class="dar" style="left:34.5px;top:23px"></div>
<svg class="abs" style="left:7px;top:42.5px" width="19" height="19" viewBox="0 0 20 20"><path d="M2 4.5 L14 1.5 L18 3 L18 15.5 L6 19 L2 17 Z" fill="url(#iw)" stroke="#55595f" stroke-width=".9" stroke-linejoin="round"/><path d="M2 4.5 L6 6 L18 3 M6 6 L6 19" fill="none" stroke="#55595f" stroke-width=".9" stroke-linejoin="round"/><path d="M8.5 8 L15.5 6.3 L15.5 13.5 L8.5 15.5 Z" fill="#f8f8f8" stroke="#1d6285" stroke-width=".9" stroke-linejoin="round"/><path d="M11.5 7.3 L15.5 6.3 L15.5 13.5 L11.5 12 Z" fill="url(#ib2)" stroke="#1d6285" stroke-width=".9" stroke-linejoin="round"/></svg>
<div class="dar" style="left:34.5px;top:50px"></div>
<div class="vsep" style="top:67px"></div>
<svg class="abs" style="left:7px;top:76px" width="19" height="19" viewBox="0 0 20 20"><path d="M0.8 5.8 L9.4 0.7 C14 0.7 19.3 3 19.3 7.5 L19.3 14.7 L10.2 19.3 L0.8 15.1 Z" fill="url(#iw)" stroke="#4a4e55" stroke-width="1.1" stroke-linejoin="round"/><path d="M9.4 0.7 C14 0.7 19.3 3 19.3 7.5 L10.2 11.5 C10.2 8 9.8 4 7.4 1.9 Z" fill="url(#ib2)" stroke="#1d5a78" stroke-width=".9" stroke-linejoin="round"/><path d="M7.4 1.9 C9.8 4 10.2 8 10.2 11.5 L10.2 19.3" fill="none" stroke="#4a4e55" stroke-width="1"/></svg>
<div class="dar" style="left:34.5px;top:84px"></div>
<svg class="abs" style="left:7px;top:103px" width="19" height="19" viewBox="0 0 20 20"><path d="M1.5 15 L6 13 L17 1.5 L19 3 L19 16 L8 19.5 Z" fill="url(#iw)" stroke="#55595f" stroke-width=".9" stroke-linejoin="round"/><path d="M6 13.5 L15.5 4 L15.5 13 L8 16 Z" fill="url(#ib2)" stroke="#1d6285" stroke-width=".9" stroke-linejoin="round"/><path d="M1.5 15 L8 19.5 M6 13 L8 16" fill="none" stroke="#55595f" stroke-width=".9" stroke-linejoin="round"/></svg>
<svg class="abs" style="left:7px;top:129px" width="19" height="19" viewBox="0 0 20 20"><path d="M1.5 5 L12 1.5 L18.5 4 L18.5 15.5 L8 19.5 L1.5 16 Z" fill="url(#iw)" stroke="#55595f" stroke-width=".9" stroke-linejoin="round"/><path d="M1.5 5 L8 7.5 L18.5 4 M8 7.5 L8 19.5" fill="none" stroke="#55595f" stroke-width=".9" stroke-linejoin="round"/><path d="M9.8 8.6 L17 6.2 L17 14.6 L9.8 17 Z" fill="url(#ib2)" stroke="#1d6285" stroke-width=".9" stroke-linejoin="round"/><path d="M9.8 8.6 L13 10 L13 15.9 M13 10 L17 8.6" fill="none" stroke="#1d6285" stroke-width=".7"/></svg>
<svg class="abs" style="left:7px;top:154.5px" width="19" height="18" viewBox="0 0 20 20"><path d="M1.5 7 L8 2 L14 3.5 L19 10 L19 16 L13 18.5 L1.5 15.5 Z" fill="url(#ib2)" stroke="#1d6285" stroke-width=".9" stroke-linejoin="round"/><path d="M13 11.5 L19 10 L19 16 L13 18.5 Z" fill="url(#iw)" stroke="#55595f" stroke-width=".9" stroke-linejoin="round"/><path d="M1.5 7 L13 11.5 L13 18.5 M13 11.5 L14 3.5" fill="none" stroke="#1d6285" stroke-width=".7"/></svg>
<svg class="abs" style="left:6.5px;top:180.5px" width="20" height="20" viewBox="0 0 20 20"><path d="M1.5 7 L10 4 L17 6.5 L17 16 L8.5 19.5 L1.5 16.5 Z" fill="url(#iw)" stroke="#55595f" stroke-width=".9" stroke-linejoin="round"/><path d="M1.5 7 L8.5 10 L17 6.5 M8.5 10 L8.5 19.5" fill="none" stroke="#55595f" stroke-width=".9" stroke-linejoin="round"/><ellipse cx="12.8" cy="13" rx="2.8" ry="3.2" fill="#fff" stroke="#1d6285" stroke-width="1.6"/><path d="M11 1.5 L17.5 8" stroke="#111" stroke-width="2.4"/><path d="M7.5 1 l1 1.6 M12 .2 l0 1.4 M16 1.5 l-1 1.2 M18.5 4 l-1.4 .5" stroke="#e0a020" stroke-width="1"/></svg>
<div class="dar" style="left:34.5px;top:189px"></div>
<div class="vsep" style="top:205px"></div>
<svg class="abs" style="left:6.5px;top:214px" width="19" height="19" viewBox="0 0 20 20"><g fill="#f7f7f7" stroke="#2b2b2b" stroke-width="1"><path d="M1.5 2 h4 v1.5 h2.5 v3 h-2.5 v1.5 h-4 Z"/><path d="M11.5 2 h4 v1.5 h2.5 v3 h-2.5 v1.5 h-4 Z"/><path d="M1.5 11.5 h4 v1.5 h2.5 v3 h-2.5 v1.5 h-4 Z"/><path d="M11.5 11.5 h4 v1.5 h2.5 v3 h-2.5 v1.5 h-4 Z"/></g><path d="M1.5 2 h4 v1.5 h2.5 v3 h-2.5 v1.5 h-4 Z" fill="#3a8fb8" stroke="#1d6285" stroke-width="1"/></svg>
<div class="dar" style="left:34.5px;top:222px"></div>
<div class="vsep" style="top:239px"></div>
<svg class="abs" style="left:6.5px;top:248.5px" width="19" height="19" viewBox="0 0 20 20"><circle cx="3.2" cy="3.6" r="2.4" fill="#5aa9cc" stroke="#1d6285" stroke-width=".9"/><path d="M6.5 7 L18.5 2.5 L18.5 15 L6.5 19.5 Z" fill="url(#ib2)" stroke="#1d6285" stroke-width=".9" stroke-linejoin="round"/><path d="M12.5 1 L12.5 20" stroke="#1d6285" stroke-width=".9" stroke-dasharray="2.2 1.2"/></svg>
<div class="dar" style="left:34.5px;top:256px"></div>
<svg class="abs" style="left:6.5px;top:275px" width="19" height="19" viewBox="0 0 20 20"><path d="M2 1.5 C6 2 7 5 5.5 9 C4 13.5 5 18 9.5 18.3 C14 18.5 15.5 13 14 9 C12.5 5 13.5 2 18 1.5" fill="none" stroke="#2f86ad" stroke-width="1.5" stroke-linecap="round"/></svg>
<div class="dar" style="left:34.5px;top:282px"></div>
<div class="vsep" style="top:299px"></div>
<div class="abs" style="left:3px;top:305px;width:27px;height:25.5px;background:#b6b9bf;border:1px solid #8ea3b6"></div>
<svg class="abs" style="left:6.5px;top:308px" width="20" height="20" viewBox="0 0 20 20"><path d="M2.5 6.5 L16.5 1.5 L18.5 8.5 L4.5 13.5 Z" fill="#f2d548" stroke="#6b5a10" stroke-width=".9" stroke-linejoin="round"/><path d="M6 5.6 l1 3 M9 4.5 l.7 2 M12 3.4 l1 3 M15 2.4 l.7 2" stroke="#3a3208" stroke-width=".9"/><path d="M3 11 L13 16" stroke="#1f5f86" stroke-width="2.6"/><path d="M18.5 18.5 L11 18.8 L14.6 12.2 Z" fill="#1f5f86"/></svg>
<div class="vsep" style="top:338px;left:0;width:45px"></div>
<div class="abs" style="left:47px;top:46.5px;width:236px;height:1px;background:#b9b9b9"></div>
<div class="ptab" style="left:86.6px"></div>
<div class="ptab" style="left:126.7px"></div>
<div class="ptab" style="left:166.8px"></div>
<div class="ptab" style="left:206.9px"></div>
<div class="abs" style="left:47px;top:22.5px;width:40px;height:25px;background:#f7f7f7"></div>
<svg class="abs" style="left:57.5px;top:25px" width="20" height="20" viewBox="0 0 20 20"><path d="M1.5 8.5 L5.5 6 L5.5 3 L9.5 1 L13 2.5 L13 8 L18.5 10.5 L18.5 15.5 L12 18.5 L1.5 13.5 Z" fill="#f3c62c" stroke="#7a5a08" stroke-width="1" stroke-linejoin="round"/><path d="M1.5 8.5 L8.5 11.5 L8.5 6.5 L5.5 5.2 M8.5 6.5 L13 4.5 M8.5 11.5 L12 13.5 L18.5 10.5 M12 13.5 L12 18.5" fill="none" stroke="#7a5a08" stroke-width=".9"/></svg>
<svg class="abs" style="left:97px;top:25.5px" width="19" height="19" viewBox="0 0 20 20"><rect x="1.5" y="1.5" width="17" height="17" rx="1.2" fill="#f4f4f4" stroke="#1e1e1e" stroke-width="1.3"/><rect x="1.5" y="1.5" width="17" height="3.6" fill="#2d86b0" stroke="#1e1e1e" stroke-width="1"/><rect x="3.6" y="7" width="3.4" height="2.4" fill="#2d86b0"/><rect x="3.6" y="10.8" width="3.4" height="2.4" fill="#2d86b0"/><rect x="3.6" y="14.6" width="3.4" height="2.4" fill="#2d86b0"/><path d="M8.6 8.2 h7.4 M8.6 12 h7.4 M8.6 15.8 h7.4" stroke="#333" stroke-width="1.1"/></svg>
<svg class="abs" style="left:137.5px;top:25.5px" width="19" height="19" viewBox="0 0 20 20"><path d="M5 2 L5 17 M5 5.5 h4 M5 14 h4" fill="none" stroke="#222" stroke-width="1.2"/><rect x="2.6" y="1.2" width="4.8" height="4" fill="#f4f4f4" stroke="#222" stroke-width="1"/><rect x="9" y="3" width="6" height="5" fill="#f4f4f4" stroke="#222" stroke-width="1"/><rect x="9" y="11.5" width="6" height="5" fill="#f4f4f4" stroke="#222" stroke-width="1"/><path d="M12 8 v3.5" stroke="#222" stroke-width="1"/></svg>
<svg class="abs" style="left:177px;top:25.5px" width="19" height="19" viewBox="0 0 20 20"><circle cx="10" cy="10" r="5.6" fill="none" stroke="#111" stroke-width="1.7"/><path d="M10 1.2 V18.8 M1.2 10 H18.8" stroke="#111" stroke-width="1.7"/></svg>
<svg class="abs" style="left:217px;top:25px" width="20" height="20" viewBox="0 0 20 20"><circle cx="10" cy="10" r="8.6" fill="#e23b2a"/><path d="M10 10 L10 1.4 A8.6 8.6 0 0 0 1.4 10 Z" fill="#3c78d8"/><path d="M10 10 L1.4 10 A8.6 8.6 0 0 0 10 18.6 Z" fill="#45a83a"/><path d="M10 10 L10 18.6 A8.6 8.6 0 0 0 18.6 10 Z" fill="#f1c21b"/><path d="M10 10 L18.6 10 A8.6 8.6 0 0 0 10 1.4 Z" fill="#d93025"/><path d="M10.5 3 A7.5 7.5 0 0 1 17.5 9.5 L13.5 9.5 Z" fill="#222"/><ellipse cx="7.5" cy="5.5" rx="4" ry="2.4" fill="#fff" opacity=".35"/></svg>
<svg class="abs" style="left:268px;top:28px" width="10" height="14" viewBox="0 0 10 14"><path d="M2.5 2 L7.5 7 L2.5 12" fill="none" stroke="#555" stroke-width="1.5"/></svg>
<div class="abs" style="left:50px;top:49px;width:231px;height:24.5px;background:#f9f9f9;border:1px solid #d3d3d3"></div>
<svg class="abs" style="left:52px;top:52px" width="19" height="19" viewBox="0 0 19 19"><ellipse cx="9.5" cy="3.6" rx="8" ry="2.3" fill="#e8f3f8" stroke="#2a7fa8" stroke-width="1.3"/><path d="M1.6 4.2 L8 11 L8 17.5 L11 16 L11 11 L17.4 4.2" fill="#fbfbfb" stroke="#3a3a3a" stroke-width="1.1" stroke-linejoin="round"/></svg>
<svg class="abs" style="left:49.5px;top:75.5px" width="19" height="19" viewBox="0 0 20 20"><path d="M1.5 8.5 L5.5 6 L5.5 3 L9.5 1 L13 2.5 L13 8 L18.5 10.5 L18.5 15.5 L12 18.5 L1.5 13.5 Z" fill="#f3c62c" stroke="#7a5a08" stroke-width="1" stroke-linejoin="round"/><path d="M1.5 8.5 L8.5 11.5 L8.5 6.5 L5.5 5.2 M8.5 6.5 L13 4.5 M8.5 11.5 L12 13.5 L18.5 10.5 M12 13.5 L12 18.5" fill="none" stroke="#7a5a08" stroke-width=".9"/></svg>
<div class="trow" style="left:72.3px;top:77.5px;letter-spacing:-0.13px;width:210px;overflow:hidden">Part2&nbsp; (Default&lt;&lt;Default&gt;_Display State</div>
<svg class="abs" style="left:53px;top:101.5px" width="8" height="11" viewBox="0 0 8 11"><path d="M2 1.2 L6.4 5.5 L2 9.8 Z" fill="#6a6a6a"/></svg>
<svg class="abs" style="left:71.5px;top:98.0px" width="19" height="19" viewBox="0 0 20 20"><path d="M1.5 17.6 L1.5 2.6 L7 2.6 L8.6 5 L18.6 5 L18.6 17.6 Z" fill="#f3f3f3" stroke="#383838" stroke-width="1.35" stroke-linejoin="round"/><path d="M1.5 7.2 L18.6 7.2" stroke="#383838" stroke-width=".7" opacity=".55"/><circle cx="11" cy="12" r="4" fill="#fff" stroke="#333" stroke-width="1"/><path d="M11 9.8 V12 L12.8 13" fill="none" stroke="#333" stroke-width=".9"/><path d="M4.5 12.5 L7.5 12.5 L6 15 Z" fill="#1d6285"/><path d="M6 12.5 C6 9.5 8 8 10 8" fill="none" stroke="#1d6285" stroke-width="1.2"/></svg>
<div class="trow" style="left:95.5px;top:100.0px;letter-spacing:0.01px">History</div>
<svg class="abs" style="left:71.5px;top:120.0px" width="19" height="19" viewBox="0 0 20 20"><path d="M1.5 17.6 L1.5 2.6 L7 2.6 L8.6 5 L18.6 5 L18.6 17.6 Z" fill="#f3f3f3" stroke="#383838" stroke-width="1.35" stroke-linejoin="round"/><path d="M1.5 7.2 L18.6 7.2" stroke="#383838" stroke-width=".7" opacity=".55"/><circle cx="10.5" cy="12" r="4.3" fill="#fff" stroke="#333" stroke-width="1"/><path d="M10.5 12 L13 9.5" stroke="#d03020" stroke-width="1.4"/><path d="M7.5 14.8 A4.3 4.3 0 0 0 13.5 14.8" fill="none" stroke="#d03020" stroke-width="1.4"/></svg>
<div class="trow" style="left:95.5px;top:122.0px;letter-spacing:-0.55px">Sensors</div>
<svg class="abs" style="left:53px;top:145.5px" width="8" height="11" viewBox="0 0 8 11"><path d="M2 1.2 L6.4 5.5 L2 9.8 Z" fill="#6a6a6a"/></svg>
<svg class="abs" style="left:71.5px;top:142.0px" width="19" height="19" viewBox="0 0 20 20"><path d="M1.5 17.6 L1.5 2.6 L7 2.6 L8.6 5 L18.6 5 L18.6 17.6 Z" fill="#f3f3f3" stroke="#383838" stroke-width="1.35" stroke-linejoin="round"/><path d="M1.5 7.2 L18.6 7.2" stroke="#383838" stroke-width=".7" opacity=".55"/><text x="5.6" y="16.4" font-family="Liberation Serif, serif" font-size="12.5" font-weight="bold" fill="#5a7890">A</text></svg>
<div class="trow" style="left:95.5px;top:144.0px;letter-spacing:0.11px">Annotations</div>
<svg class="abs" style="left:53px;top:167.5px" width="8" height="11" viewBox="0 0 8 11"><path d="M2 1.2 L6.4 5.5 L2 9.8 Z" fill="#6a6a6a"/></svg>
<svg class="abs" style="left:71.5px;top:164.0px" width="19" height="19" viewBox="0 0 20 20"><path d="M1.5 17.6 L1.5 2.6 L7 2.6 L8.6 5 L18.6 5 L18.6 17.6 Z" fill="#f3f3f3" stroke="#383838" stroke-width="1.35" stroke-linejoin="round"/><path d="M1.5 7.2 L18.6 7.2" stroke="#383838" stroke-width=".7" opacity=".55"/><path d="M4 11 C6 9 8 11 10 9 L13 8 L16.5 11.5 C14 12.5 13 14.5 10.5 15.5 L7.5 16 Z" fill="url(#ib)" stroke="#1d6285" stroke-width=".7"/></svg>
<div class="trow" style="left:95.5px;top:166.0px;letter-spacing:-0.34px">Surface Bodies(1)</div>
<svg class="abs" style="left:53px;top:189.5px" width="8" height="11" viewBox="0 0 8 11"><path d="M2 1.2 L6.4 5.5 L2 9.8 Z" fill="#6a6a6a"/></svg>
<svg class="abs" style="left:71.5px;top:186.0px" width="19" height="19" viewBox="0 0 20 20"><path d="M1.5 17.6 L1.5 2.6 L7 2.6 L8.6 5 L18.6 5 L18.6 17.6 Z" fill="#f3f3f3" stroke="#383838" stroke-width="1.35" stroke-linejoin="round"/><path d="M1.5 7.2 L18.6 7.2" stroke="#383838" stroke-width=".7" opacity=".55"/><path d="M6 10.5 L10 9 L14 10.5 L14 15 L10 16.5 L6 15 Z" fill="url(#ib2)" stroke="#1d6285" stroke-width=".8"/><path d="M6 10.5 L10 12 L14 10.5 M10 12 V16.5" fill="none" stroke="#1d6285" stroke-width=".7"/></svg>
<div class="trow" style="left:95.5px;top:188.0px;letter-spacing:-0.26px">Solid Bodies(1)</div>
<svg class="abs" style="left:71.5px;top:208.0px" width="19" height="19" viewBox="0 0 20 20"><circle cx="2.6" cy="3" r="1.9" fill="#fff" stroke="#555" stroke-width=".9"/><circle cx="2.6" cy="9" r="1.9" fill="#4aa0cc" stroke="#1d6285" stroke-width=".9"/><circle cx="2.6" cy="15" r="1.9" fill="#f0b820" stroke="#8a6508" stroke-width=".9"/><path d="M6.5 3 H18 M6.5 9 H18 M6.5 15 H11" stroke="#2a2a2a" stroke-width="1.5"/><circle cx="15" cy="15.5" r="3" fill="#222"/><circle cx="15" cy="15.5" r="1.1" fill="#f7f7f7"/><path d="M15 11.5 v8 M11 15.5 h8 M12.2 12.7 l5.6 5.6 M17.8 12.7 l-5.6 5.6" stroke="#222" stroke-width="1.2"/><circle cx="15" cy="15.5" r="1.1" fill="#f7f7f7"/></svg>
<div class="trow" style="left:95.5px;top:210.0px;letter-spacing:0.02px">Material &lt;not specified&gt;</div>
<svg class="abs" style="left:71.5px;top:230.0px" width="19" height="19" viewBox="0 0 20 20"><path d="M4 4.5 L15.5 1.5 L15.5 15.5 L4 18.5 Z" fill="#fbfbfb" stroke="#3a3a3a" stroke-width="1" stroke-linejoin="round"/><path d="M9.8 .5 V20" stroke="#3a3a3a" stroke-width="1" stroke-dasharray="2.6 1.6"/></svg>
<div class="trow" style="left:95.5px;top:232.0px;letter-spacing:-0.20px">Front Plane</div>
<svg class="abs" style="left:71.5px;top:252.0px" width="19" height="19" viewBox="0 0 20 20"><path d="M4 4.5 L15.5 1.5 L15.5 15.5 L4 18.5 Z" fill="#fbfbfb" stroke="#3a3a3a" stroke-width="1" stroke-linejoin="round"/><path d="M9.8 .5 V20" stroke="#3a3a3a" stroke-width="1" stroke-dasharray="2.6 1.6"/></svg>
<div class="trow" style="left:95.5px;top:254.0px;letter-spacing:-0.17px">Top Plane</div>
<svg class="abs" style="left:71.5px;top:274.0px" width="19" height="19" viewBox="0 0 20 20"><path d="M4 4.5 L15.5 1.5 L15.5 15.5 L4 18.5 Z" fill="#fbfbfb" stroke="#3a3a3a" stroke-width="1" stroke-linejoin="round"/><path d="M9.8 .5 V20" stroke="#3a3a3a" stroke-width="1" stroke-dasharray="2.6 1.6"/></svg>
<div class="trow" style="left:95.5px;top:276.0px;letter-spacing:-0.20px">Right Plane</div>
<svg class="abs" style="left:71.5px;top:296.0px" width="19" height="19" viewBox="0 0 20 20"><path d="M4.6 3 V16.2 H17" fill="none" stroke="#111" stroke-width="2"/><path d="M1.4 5.4 L4.6 .4 L7.8 5.4 Z M14.6 13 L19.8 16.2 L14.6 19.4 Z" fill="#111"/><rect x="3" y="14.6" width="3.2" height="3.2" fill="#111"/></svg>
<div class="trow" style="left:95.5px;top:298.0px;letter-spacing:-0.03px">Origin</div>
<svg class="abs" style="left:53px;top:321.5px" width="8" height="11" viewBox="0 0 8 11"><path d="M2 1.2 L6.4 5.5 L2 9.8 Z" fill="#6a6a6a"/></svg>
<svg class="abs" style="left:71.5px;top:318.0px" width="19" height="19" viewBox="0 0 20 20"><path d="M9 2 L17 1 L19 3 L19 15 L12 17 L9 14 Z" fill="url(#iw)" stroke="#55595f" stroke-width=".9" stroke-linejoin="round"/><path d="M1 7.5 L7 5 L12 6.5 L12 14 L5.5 17 L1 14.5 Z" fill="url(#ib2)" stroke="#1d6285" stroke-width=".9" stroke-linejoin="round"/><path d="M1 7.5 L5.5 9.5 L12 6.5 M5.5 9.5 L5.5 17" fill="none" stroke="#1d6285" stroke-width=".8"/></svg>
<div class="trow" style="left:95.5px;top:320.0px;letter-spacing:-0.45px">Boss-Extrude1</div>
<svg class="abs" style="left:53px;top:343.5px" width="8" height="11" viewBox="0 0 8 11"><path d="M2 1.2 L6.4 5.5 L2 9.8 Z" fill="#6a6a6a"/></svg>
<svg class="abs" style="left:71.5px;top:340.0px" width="19" height="19" viewBox="0 0 20 20"><path d="M0.6 9 C2.5 7 3.5 6 5 6.2 C6.5 6.5 7 6.5 8 5.5 L11.8 1.4 L17.9 9.2 C16.5 10.5 15.5 12 14.5 12.4 C13 13 11.5 13.2 10.1 14.2 C9 15 8.2 16.5 7.2 17.9 L0.6 11 Z" fill="url(#ibh)" stroke="#1c5c78" stroke-width="1" stroke-linejoin="round"/><path d="M12.3 0.8 L17 6" stroke="#15151f" stroke-width="2.7"/><path d="M19.4 8.4 L19 2 L13.5 7.7 Z" fill="#15151f"/></svg>
<div class="trow" style="left:95.5px;top:342.0px;letter-spacing:-0.32px">Surface-Extrude1</div>
<div class="abs" style="left:69px;top:360.0px;width:104px;height:21.5px;background:#a9cbe9;border:1px solid #7fb0da"></div>
<svg class="abs" style="left:71.5px;top:362.0px" width="19" height="19" viewBox="0 0 20 20"><path d="M1.5 11 L7 8.5 L18.5 10.5 L18.5 15.5 L6 19.5 L1.5 16.5 Z" fill="url(#iw)" stroke="#2f353b" stroke-width="1" stroke-linejoin="round"/><path d="M1.5 11 L6 13.5 L18.5 10.5 M6 13.5 L6 19.5" fill="none" stroke="#2f353b" stroke-width=".9"/><path d="M1 3 C4 1.6 7 1.4 10 1 L11 3 C13.5 3.6 16 4 18.6 4.4 L18.6 8 C16.5 8.8 14.5 9.2 12 9.6 L9.4 8 L5 9.6 L4.4 5.6 L1 5 Z" fill="url(#ib)" stroke="#1d5a78" stroke-width=".9" stroke-linejoin="round"/></svg>
<div class="trow" style="left:95.5px;top:364.0px;letter-spacing:-0.64px">Replace Face1</div>
<div class="abs" style="left:47px;top:382px;width:235px;height:2.2px;background:#1d62ad"></div>
<div class="abs scrollstrip" style="left:48px;top:858.5px;width:234px;height:1.5px;background:#fdfdfd"></div><div class="abs" style="left:64px;top:859px;width:188px;height:1px;background:#cdcdcd"></div>
<!--LEFTPANEL-E-->
</div>
<!--OVERLAY-S-->
<svg class="abs" style="left:925px;top:120.5px" width="20" height="20" viewBox="0 0 20 20"><path d="M3.4 16.8 L8 12.4" stroke="#5b8da8" stroke-width="4" stroke-linecap="round"/><path d="M3.4 16.8 L8 12.4" stroke="#93bfd4" stroke-width="2.4" stroke-linecap="round"/><circle cx="12.4" cy="7.4" r="6.2" fill="#f3f3f5" stroke="#85858a" stroke-width="1.3"/><path d="M12.4 3.2 l-1.6 2 h3.2 Z M12.4 11.6 l-1.6 -2 h3.2 Z M8.2 7.4 l2 -1.6 v3.2 Z M16.6 7.4 l-2 -1.6 v3.2 Z" fill="#555"/></svg>
<svg class="abs" style="left:951px;top:120.5px" width="20" height="20" viewBox="0 0 20 20"><path d="M3.4 16.8 L8 12.4" stroke="#5b8da8" stroke-width="4" stroke-linecap="round"/><path d="M3.4 16.8 L8 12.4" stroke="#93bfd4" stroke-width="2.4" stroke-linecap="round"/><rect x="7" y="1" width="12" height="12" fill="none" stroke="#444" stroke-width="1.1" stroke-dasharray="2.6 1.8"/><circle cx="11.5" cy="8" r="6" fill="#e6e6ea" stroke="#9a9a9e" stroke-width="1.1"/></svg>
<svg class="abs" style="left:977.5px;top:120.5px" width="20" height="20" viewBox="0 0 20 20"><path d="M1.5 13 L13.5 1.5 L18.5 4.5 L7.5 18 Z" fill="#e4e4e6" stroke="#8c8c90" stroke-width="1"/><ellipse cx="4.6" cy="15.4" rx="3.6" ry="2.6" transform="rotate(35 4.6 15.4)" fill="#f6f6f6" stroke="#8c8c90" stroke-width="1"/><path d="M19 16 H13" stroke="#3f8fb8" stroke-width="2.8"/><path d="M9.5 16 L14 12.6 V19.4 Z" fill="#3f8fb8"/></svg>
<svg class="abs" style="left:1003.5px;top:121.0px" width="19" height="19" viewBox="0 0 20 20"><path d="M1.5 6 C1.5 2 18.5 2 18.5 6 L18.5 15 C18.5 16.8 16 18 13.5 18.3 L13.5 9 C11 8 9 8 6.5 9 L6.5 18.3 C4 18 1.5 16.8 1.5 15 Z" fill="#d9d9dd" stroke="#77777c" stroke-width="1"/><path d="M1.5 7 C3 9 5 9.3 6.5 9.3 L6.5 18.3 C4 18 1.5 16.8 1.5 15 Z" fill="#4d98bd" stroke="#1d6285" stroke-width=".8"/><path d="M13.5 9.3 C15 9.3 17 9 18.5 7 L18.5 15 C18.5 16.8 16 18 13.5 18.3 Z" fill="#4d98bd" stroke="#1d6285" stroke-width=".8"/><path d="M2.5 12 l3 -2.5 M2.5 15 l3.5 -3 M3.5 17 l3 -2.5 M14.2 12.5 l3.5 -3 M14.2 15.5 l4 -3.4 M15 17.6 l3 -2.5" stroke="#d5ecf5" stroke-width=".9"/></svg>
<svg class="abs" style="left:1029px;top:120.5px" width="20" height="20" viewBox="0 0 20 20"><path d="M2 13 L13.5 2 L18 5 L8 18 Z" fill="#e4e4e6" stroke="#8c8c90" stroke-width="1"/><ellipse cx="5" cy="15.4" rx="3.6" ry="2.6" transform="rotate(35 5 15.4)" fill="#f6f6f6" stroke="#8c8c90" stroke-width="1"/><path d="M4 7.5 L9 1 L12 2 L9.5 5 L12.5 5.5 L5.5 10.5 L7.5 7.5 Z" fill="#f3a81c" stroke="#c67c08" stroke-width=".6"/><text x="10.4" y="19.6" font-family="Liberation Serif, serif" font-size="12.5" fill="#5a9ab2">A</text></svg>
<svg class="abs" style="left:1055.5px;top:121.0px" width="19" height="19" viewBox="0 0 20 20"><path d="M1.5 7 L7 1.5 L19 1.5 L19 13.5 L13.5 19 L1.5 19 Z" fill="#fdfdfd" stroke="#555" stroke-width="1"/><path d="M13.5 7 L19 1.5 M13 4 v-2.5 M16.2 7.5 l2.6 0 M16 13 l2.8 -2.8" stroke="#555" stroke-width="1" stroke-dasharray="2 1.4"/><rect x="1.5" y="7" width="12" height="12" fill="url(#ib2)" stroke="#1d6285" stroke-width="1"/></svg>
<div class="dar" style="left:1081px;top:129px;border-top-color:#9a9a9a"></div>
<svg class="abs" style="left:1096.5px;top:121.0px" width="19" height="19" viewBox="0 0 20 20"><path d="M2 4.5 L12 1.5 L18 3 L18 15.5 L8 19 L2 17 Z" fill="#f6f6f4" stroke="#777" stroke-width="1"/><path d="M2 4.5 L8 6.2 L8 19 L2 17 Z" fill="#3f8cb6" stroke="#1d6285" stroke-width=".8"/><path d="M8 6.2 L13 4.8 L13 17.2 L8 19 Z" fill="#9fd0e4" stroke="#1d6285" stroke-width=".5"/><path d="M2 4.5 L8 6.2 L18 3" fill="none" stroke="#1d6285" stroke-width=".8"/></svg>
<div class="dar" style="left:1121.5px;top:129px;border-top-color:#9a9a9a"></div>
<svg class="abs" style="left:1136px;top:121.0px" width="19" height="19" viewBox="0 0 20 20"><path d="M1 10 C5 3.5 15 3.5 19 10 C15 16.5 5 16.5 1 10 Z" fill="#ededee" stroke="#a9a9ad" stroke-width="1"/><circle cx="10" cy="9.6" r="4.3" fill="#8d8d92"/><path d="M10 5.3 A4.3 4.3 0 0 0 10 13.9 Z" fill="#6a6a70"/><path d="M10 1.5 V18.5" stroke="#555" stroke-width="1"/></svg>
<div class="dar" style="left:1161.5px;top:129px;border-top-color:#9a9a9a"></div>
<svg class="abs" style="left:1175px;top:120.5px" width="20" height="20" viewBox="0 0 20.5 20.5"><circle cx="9" cy="9" r="8" fill="#d94a52"/><path d="M9 9 L9 1 A8 8 0 0 0 1 9 Z" fill="#4f88d6"/><path d="M9 9 L1 9 A8 8 0 0 0 9 17 Z" fill="#57b04a"/><path d="M9 9 L9 17 A8 8 0 0 0 17 9 Z" fill="#f1f1f1"/><ellipse cx="6.5" cy="4.8" rx="4.2" ry="2.6" fill="#fff" opacity=".35"/><path d="M8 17 L16 8 L19.2 11 L11 19.5 L7 20 Z" fill="#f0d54a" stroke="#7a6a20" stroke-width=".8"/><path d="M16 8 L17.5 6.3 L20 8.8 L19.2 11 Z" fill="#d86a7a" stroke="#7a3040" stroke-width=".7"/><path d="M7 20 L8 17 L11 19.5 Z" fill="#333"/></svg>
<svg class="abs" style="left:1201.5px;top:121.0px" width="19.5" height="19.5" viewBox="0 0 19 20"><circle cx="9" cy="9" r="8" fill="#d94a52"/><path d="M9 9 L9 1 A8 8 0 0 0 1 9 Z" fill="#4f88d6"/><path d="M9 9 L1 9 A8 8 0 0 0 9 17 Z" fill="#57b04a"/><path d="M9 9 L9 17 A8 8 0 0 0 17 9 Z" fill="#e8c13a"/><ellipse cx="6.5" cy="4.8" rx="4.2" ry="2.6" fill="#fff" opacity=".35"/><rect x="0.5" y="11.5" width="17.5" height="8" fill="#444"/><path d="M.5 13.5 h17.5 M.5 17 h17.5" stroke="#444"/><g fill="#f4f4f4"><rect x="2" y="13" width="3" height="2.4"/><rect x="8" y="13" width="3" height="2.4"/><rect x="14" y="13" width="3" height="2.4"/><rect x="5" y="16.4" width="3" height="2.4"/><rect x="11" y="16.4" width="3" height="2.4"/></g><path d="M1 9 A8 8 0 0 0 3.4 14.6 L9 14.6 L9 9 Z" fill="#57b04a"/><path d="M17 9 A8 8 0 0 1 14.6 14.6 L9 14.6 L9 9 Z" fill="#e8c13a"/></svg>
<div class="dar" style="left:1227px;top:129px;border-top-color:#9a9a9a"></div>
<svg class="abs" style="left:1241.5px;top:122.0px" width="19" height="18" viewBox="0 0 20 20"><rect x="1" y="1.5" width="18" height="12.5" fill="#dedede" stroke="#4a4a4a" stroke-width="1.2"/><path d="M10 14 V17" stroke="#4a4a4a" stroke-width="2"/><path d="M6 17.5 H14" stroke="#3a3a3a" stroke-width="1.6"/></svg>
<div class="dar" style="left:1267px;top:129px;border-top-color:#9a9a9a"></div>
<div class="abs" style="left:284.5px;top:545px;width:6.5px;height:38px;background:#f4f4f5;border:1px solid #8a8a8a;border-left:none"></div><div class="abs" style="left:285.5px;top:560.5px;width:4.6px;height:4.6px;border-radius:50%;border:1px solid #9a9a9a;background:#e2e2e2"></div>
<!--OVERLAY-E-->
</body>
</html>
